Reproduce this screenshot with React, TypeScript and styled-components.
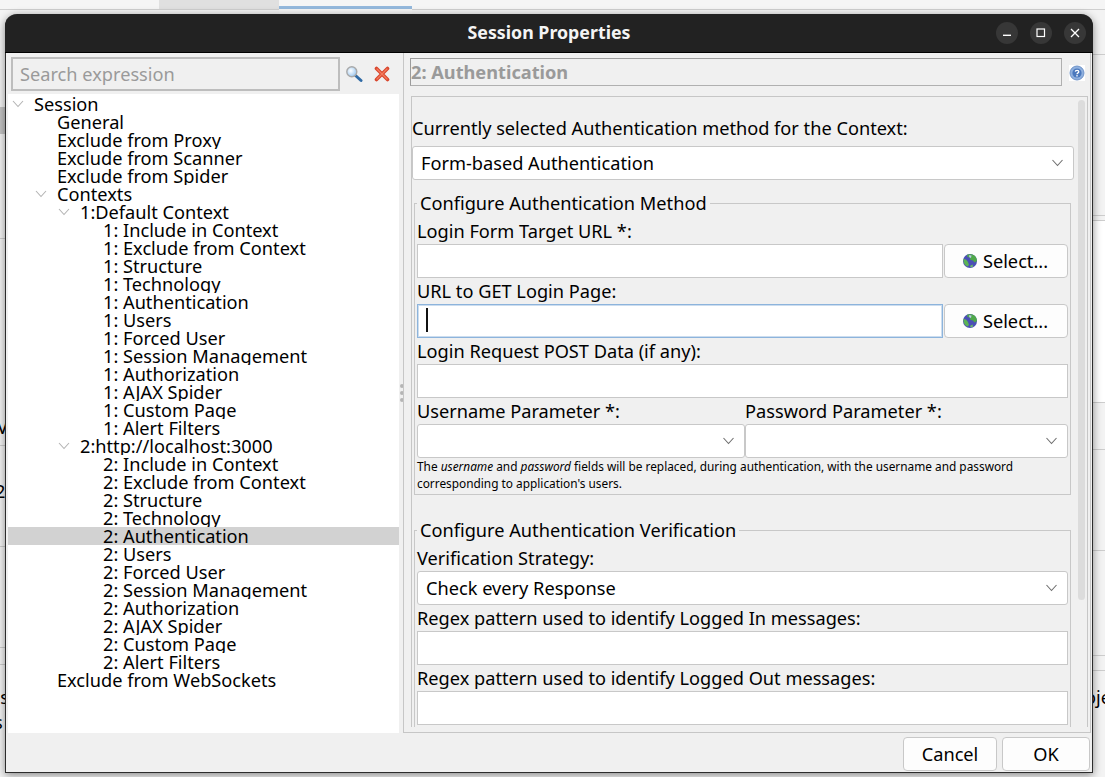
import styled, { createGlobalStyle } from "styled-components";

const FONT = `"Noto Sans", "DejaVu Sans", sans-serif`;

type TreeNode = {
  label: string;
  level: number;
  open?: boolean;
  selected?: boolean;
};

const contextItems = (n: number): TreeNode[] =>
  [
    "Include in Context",
    "Exclude from Context",
    "Structure",
    "Technology",
    "Authentication",
    "Users",
    "Forced User",
    "Session Management",
    "Authorization",
    "AJAX Spider",
    "Custom Page",
    "Alert Filters",
  ].map(name => ({
    label: `${n}: ${name}`,
    level: 3,
    selected: n === 2 && name === "Authentication",
  }));

const treeNodes: TreeNode[] = [
  { label: "Session", level: 0, open: true },
  { label: "General", level: 1 },
  { label: "Exclude from Proxy", level: 1 },
  { label: "Exclude from Scanner", level: 1 },
  { label: "Exclude from Spider", level: 1 },
  { label: "Contexts", level: 1, open: true },
  { label: "1:Default Context", level: 2, open: true },
  ...contextItems(1),
  { label: "2:http://localhost:3000", level: 2, open: true },
  ...contextItems(2),
  { label: "Exclude from WebSockets", level: 1 },
];

// window lines of the app behind the dialog
const backdropRules = [
  { top: 238, side: "left" },
  { top: 445, side: "left" },
  { top: 546, side: "left" },
  { top: 647, side: "left" },
  { top: 664, side: "left" },
  { top: 54, side: "right" },
  { top: 215, side: "right" },
  { top: 220, side: "right" },
  { top: 402, side: "right" },
  { top: 449, side: "right" },
  { top: 550, side: "right" },
  { top: 655, side: "right" },
  { top: 670, side: "right" },
];

const Chevron = () => (
  <ChevronSvg width="13" height="8" viewBox="0 0 13 8" fill="none">
    <path d="M1.5 1 L6.5 6.5 L11.5 1" stroke="#6e6e6e" strokeWidth="1.1" />
  </ChevronSvg>
);

const TreeChevron = () => (
  <svg width="12" height="8" viewBox="0 0 12 8" fill="none">
    <path d="M1 1 L6 6.5 L11 1" stroke="#b4b4b4" strokeWidth="1.1" />
  </svg>
);

const SearchIcon = () => (
  <svg width="18" height="18" viewBox="0 0 18 18">
    <defs>
      <radialGradient id="lens" cx="40%" cy="40%" r="70%">
        <stop offset="0%" stopColor="#ffffff" />
        <stop offset="100%" stopColor="#8fc0ee" />
      </radialGradient>
    </defs>
    <path d="M10.5 10.5 L16 15.5" stroke="#2f6aa5" strokeWidth="3" strokeLinecap="round" />
    <circle cx="6.8" cy="6.8" r="5" fill="url(#lens)" stroke="#a9a9a9" strokeWidth="1.4" />
  </svg>
);

const ClearIcon = () => (
  <svg width="16" height="16" viewBox="0 0 16 16">
    <path d="M2.5 2.5 L13.5 13.5 M13.5 2.5 L2.5 13.5" stroke="#d8452c" strokeWidth="3.6" strokeLinecap="round" />
    <path d="M3 3 L13 13 M13 3 L3 13" stroke="#f47b5e" strokeWidth="1.4" strokeLinecap="round" />
  </svg>
);

const HelpIcon = () => (
  <svg width="16" height="16" viewBox="0 0 16 16">
    <rect width="16" height="16" fill="#ffffff" />
    <circle cx="8" cy="8" r="7" fill="#8fb0de" stroke="#6f93c8" />
    <circle cx="8" cy="8" r="4.6" fill="#4a78bd" />
    <path d="M6.3 6.6 C6.4 4.9 9.8 4.9 9.8 6.7 C9.8 7.9 8 7.8 8 9.2" stroke="#fff" strokeWidth="1.3" fill="none" />
    <rect x="7.3" y="10.1" width="1.4" height="1.4" fill="#fff" />
  </svg>
);

const GlobeIcon = () => (
  <svg width="14" height="14" viewBox="0 0 14 14">
    <circle cx="7" cy="7" r="7" fill="#4a4fb5" />
    <path d="M4 .8 C6 -.2 10 0 12 2 C13.5 3.5 14 6 14 7 L11.5 8.5 L10 6.5 L7.5 6 L6.5 3.5 L4.5 3 Z" fill="#4fa84a" />
    <path d="M.3 5 L3 5.5 L5 8 L6 11 L4.5 12.5 C2 11.5 .2 9 .3 5 Z" fill="#5cb356" />
    <path d="M7 12 L9.5 10.5 L10 12.5 L8 13.5 Z" fill="#6fbf68" />
    <path d="M6 1.2 L8.5 1.5 L8 4 L6.3 3.2 Z" fill="#b9c7e8" />
  </svg>
);

const App = () => {
  return (
    <>
      <GlobalStyle />
      <Desktop>
        <TopStrip>
          <TopTab />
          <ActiveTab />
        </TopStrip>
        <LeftDarkBlock />
        {backdropRules.map(rule => (
          <BackdropRule key={`${rule.side}${rule.top}`} $top={rule.top} $side={rule.side} />
        ))}
        <WhiteGap />
        <BackdropText $top={415} $left={-3}>V</BackdropText>
        <BackdropText $top={479} $left={-5}>2</BackdropText>
        <BackdropText $top={685} $left={-11}>us</BackdropText>
        <BackdropText $top={710} $left={-6}>s</BackdropText>
        <BackdropText $top={685} $left={1085}>oject</BackdropText>

        <Dialog>
          <TitleBar>
            <TitleText>Session Properties</TitleText>
            <WindowButtons>
              <WindowButton aria-label="Minimize">
                <svg width="12" height="12" viewBox="0 0 12 12">
                  <rect x="2" y="7.6" width="8" height="1.4" fill="#fff" />
                </svg>
              </WindowButton>
              <WindowButton aria-label="Maximize">
                <svg width="12" height="12" viewBox="0 0 12 12" fill="none">
                  <rect x="2" y="2" width="7.5" height="7.5" stroke="#fff" strokeWidth="1.2" />
                </svg>
              </WindowButton>
              <WindowButton aria-label="Close">
                <svg width="12" height="12" viewBox="0 0 12 12" fill="none">
                  <path d="M2 2 L10 10 M10 2 L2 10" stroke="#fff" strokeWidth="1.3" />
                </svg>
              </WindowButton>
            </WindowButtons>
          </TitleBar>

          <Main>
            <LeftPanel>
              <SearchRow>
                <SearchInput placeholder="Search expression" />
                <SearchIconSlot>
                  <SearchIcon />
                </SearchIconSlot>
                <ClearIconSlot>
                  <ClearIcon />
                </ClearIconSlot>
              </SearchRow>
              <Tree>
                {treeNodes.map(node => (
                  <TreeRow key={node.label} $level={node.level} $selected={node.selected}>
                    <Expander>{node.open && <TreeChevron />}</Expander>
                    {node.label}
                  </TreeRow>
                ))}
              </Tree>
            </LeftPanel>

            <Splitter>
              <SplitterDot />
              <SplitterDot />
              <SplitterDot />
            </Splitter>

            <RightPanel>
              <HeaderRow>
                <PanelTitle>2: Authentication</PanelTitle>
                <HelpSlot>
                  <HelpIcon />
                </HelpSlot>
              </HeaderRow>
              <ScrollBox>
                <ScrollThumb />
                <PlainLabel>Currently selected Authentication method for the Context:</PlainLabel>
                <MethodCombo>
                  Form-based Authentication
                  <Chevron />
                </MethodCombo>

                <Group>
                  <Legend>Configure Authentication Method</Legend>
                  <FieldLabel>Login Form Target URL *:</FieldLabel>
                  <FieldRow>
                    <TextField />
                    <SelectButton>
                      <GlobeIcon />
                      Select...
                    </SelectButton>
                  </FieldRow>
                  <FieldLabel>URL to GET Login Page:</FieldLabel>
                  <FieldRow>
                    <TextField $focused>
                      <Caret />
                    </TextField>
                    <SelectButton>
                      <GlobeIcon />
                      Select...
                    </SelectButton>
                  </FieldRow>
                  <FieldLabel>Login Request POST Data (if any):</FieldLabel>
                  <FieldRow>
                    <TextField />
                  </FieldRow>
                  <ParamLabels>
                    <FieldLabel>Username Parameter *:</FieldLabel>
                    <FieldLabel>Password Parameter *:</FieldLabel>
                  </ParamLabels>
                  <ParamCombos>
                    <Combo>
                      <Chevron />
                    </Combo>
                    <Combo>
                      <Chevron />
                    </Combo>
                  </ParamCombos>
                  <Note>
                    The <em>username</em> and <em>password</em> fields will be replaced, during authentication, with the
                    username and password corresponding to application's users.
                  </Note>
                </Group>

                <SecondGroup>
                  <Legend>Configure Authentication Verification</Legend>
                  <FieldLabel>Verification Strategy:</FieldLabel>
                  <FieldRow>
                    <StrategyCombo>
                      Check every Response
                      <Chevron />
                    </StrategyCombo>
                  </FieldRow>
                  <FieldLabel>Regex pattern used to identify Logged In messages:</FieldLabel>
                  <FieldRow>
                    <TextField />
                  </FieldRow>
                  <FieldLabel>Regex pattern used to identify Logged Out messages:</FieldLabel>
                  <FieldRow>
                    <TextField />
                  </FieldRow>
                </SecondGroup>
              </ScrollBox>
            </RightPanel>
          </Main>

          <Footer>
            <CancelButton>Cancel</CancelButton>
            <OkButton>OK</OkButton>
          </Footer>
        </Dialog>
      </Desktop>
    </>
  );
};

export default App;

const GlobalStyle = createGlobalStyle`
  * {
    box-sizing: border-box;
  }
  html, body {
    margin: 0;
    padding: 0;
    background: #f3f3f3;
  }
`;

const ChevronSvg = styled.svg`
  flex: none;
  margin-left: auto;
`;

const Desktop = styled.div`
  position: relative;
  width: 1105px;
  height: 777px;
  overflow: hidden;
  font-family: ${FONT};
  font-size: 18.2px;
  color: #000;
`;

const TopStrip = styled.div`
  display: flex;
  height: 10px;
  padding-left: 159px;
  background: #f5f5f5;
  border-bottom: 1px solid #cfcfcf;
`;

const TopTab = styled.div`
  width: 120px;
  background: #e0e0e0;
`;

const ActiveTab = styled.div`
  width: 133px;
  height: 9px;
  border-top: 3px solid #94b8dc;
  margin-top: 6px;
  background: #f5f5f5;
`;

const LeftDarkBlock = styled.div`
  position: absolute;
  left: 0;
  top: 107px;
  width: 5px;
  height: 27px;
  background: #c4c4c4;
`;

const BackdropRule = styled.div<{ $top: number; $side: string }>`
  position: absolute;
  top: ${p => p.$top}px;
  ${p => (p.$side === "left" ? "left: 0;" : "right: 0;")}
  width: 14px;
  height: 1px;
  background: #cdcdcd;
`;

const WhiteGap = styled.div`
  position: absolute;
  right: 0;
  top: 221px;
  width: 14px;
  height: 181px;
  background: #fff;
`;

const BackdropText = styled.div<{ $top: number; $left: number }>`
  position: absolute;
  top: ${p => p.$top}px;
  left: ${p => p.$left}px;
  white-space: nowrap;
`;

const Dialog = styled.div`
  position: absolute;
  left: 5px;
  top: 14px;
  width: 1088px;
  height: 759px;
  display: flex;
  flex-direction: column;
  background: #f0f0f0;
  border: 1px solid #2c2c2c;
  border-top: none;
  border-radius: 12px 12px 0 0;
  box-shadow: 0 2px 9px rgba(0, 0, 0, 0.45);
`;

const TitleBar = styled.div`
  position: relative;
  flex: none;
  height: 39px;
  margin: 0 -1px;
  padding-bottom: 2px;
  display: flex;
  align-items: center;
  justify-content: center;
  background: #222222;
  border-bottom: 1px solid #000;
  border-radius: 12px 12px 0 0;
`;

const TitleText = styled.div`
  font-size: 17.8px;
  font-weight: 700;
  color: #f4f4f4;
`;

const WindowButtons = styled.div`
  position: absolute;
  right: 7px;
  top: 8px;
  display: flex;
  gap: 12px;
`;

const WindowButton = styled.div`
  width: 22px;
  height: 22px;
  display: flex;
  align-items: center;
  justify-content: center;
  border-radius: 50%;
  background: #373737;
`;

const Main = styled.div`
  flex: none;
  height: 680px;
  display: flex;
`;

const LeftPanel = styled.div`
  width: 394px;
  display: flex;
  flex-direction: column;
`;

const SearchRow = styled.div`
  flex: none;
  height: 41px;
  padding: 4px 0 0 5px;
  display: flex;
  align-items: flex-start;
`;

const SearchInput = styled.input`
  width: 329px;
  height: 34px;
  padding: 0 0 1px 7px;
  background: #f0f0f0;
  border: 2px solid #bdbdbd;
  outline: none;
  font-family: ${FONT};
  font-size: 18.2px;
  &::placeholder {
    color: #9a9a9a;
    opacity: 1;
  }
`;

const IconSlot = styled.div`
  display: flex;
  flex: none;
`;

const SearchIconSlot = styled(IconSlot)`
  margin: 8px 0 0 5px;
`;

const ClearIconSlot = styled(IconSlot)`
  margin: 9px 0 0 11px;
`;

const Tree = styled.div`
  flex: 1;
  margin-left: 2px;
  width: 391px;
  padding-top: 1px;
  background: #fff;
  overflow: hidden;
`;

const TreeRow = styled.div<{ $level: number; $selected?: boolean }>`
  height: 18px;
  line-height: 18px;
  padding-left: ${p => 4 + p.$level * 23}px;
  display: flex;
  align-items: center;
  overflow: hidden;
  white-space: nowrap;
  background: ${p => (p.$selected ? "#d2d2d2" : "transparent")};
`;

const Expander = styled.span`
  flex: none;
  width: 22px;
  height: 18px;
  display: flex;
  align-items: center;
`;

const Splitter = styled.div`
  width: 3px;
  display: flex;
  flex-direction: column;
  align-items: center;
  justify-content: center;
  gap: 3px;
`;

const SplitterDot = styled.div`
  width: 4px;
  height: 4px;
  flex: none;
  border-radius: 50%;
  background: #b5b5b5;
`;

const RightPanel = styled.div`
  width: 688px;
  display: flex;
  flex-direction: column;
  border: 1px solid #c6c6c6;
  border-top: none;
`;

const HeaderRow = styled.div`
  flex: none;
  height: 43px;
  padding: 5px 0 0 6px;
  display: flex;
`;

const PanelTitle = styled.div`
  width: 652px;
  height: 28px;
  line-height: 26px;
  font-weight: 700;
  font-size: 18.2px;
  color: #9a9a9a;
  border: 1px solid #b0b0b0;
  border-top-color: #9c9c9c;
  border-left-color: #9c9c9c;
`;

const HelpSlot = styled(IconSlot)`
  margin: 7px 0 0 7px;
`;

const ScrollBox = styled.div`
  position: relative;
  flex: none;
  width: 677px;
  height: 631px;
  margin-left: 7px;
  padding-top: 22px;
  border: 1px solid #c6c6c6;
  border-bottom: none;
  overflow: hidden;
`;

const ScrollThumb = styled.div`
  position: absolute;
  right: 2px;
  top: 3px;
  width: 7px;
  height: 500px;
  border-radius: 4px;
  background: #dcdcdc;
`;

const PlainLabel = styled.div`
  height: 18px;
  line-height: 18px;
  white-space: nowrap;
`;

const Combo = styled.div`
  height: 34px;
  padding: 0 9px 1px 8px;
  display: flex;
  align-items: center;
  background: #fff;
  border: 1px solid #c8c8c8;
  border-radius: 3px;
  white-space: nowrap;
`;

const MethodCombo = styled(Combo)`
  width: 662px;
  margin-top: 9px;
`;

const StrategyCombo = styled(Combo)`
  flex: 1;
`;

const Group = styled.fieldset`
  width: 657px;
  margin: 13px 0 0 2px;
  padding: 5px 2px 2px 2px;
  border: 1px solid #c8c8c8;
  min-inline-size: 0;
`;

const SecondGroup = styled(Group)`
  margin-top: 25px;
  height: 240px;
`;

const Legend = styled.legend`
  height: 20px;
  line-height: 20px;
  margin-left: 0;
  padding: 0 3px;
`;

const FieldLabel = styled.div`
  height: 18px;
  line-height: 18px;
  margin: 4px 0;
  white-space: nowrap;
`;

const FieldRow = styled.div`
  height: 34px;
  display: flex;
  align-items: stretch;
  gap: 1px;
`;

const TextField = styled.div<{ $focused?: boolean }>`
  position: relative;
  flex: 1;
  background: #fff;
  border: 1px solid ${p => (p.$focused ? "#8db4dc" : "#c8c8c8")};
  box-shadow: ${p => (p.$focused ? "inset 0 0 0 1px rgba(141, 180, 220, 0.45)" : "none")};
`;

const Caret = styled.div`
  position: absolute;
  left: 8px;
  top: 3px;
  width: 2px;
  height: 24px;
  background: #111;
`;

const SelectButton = styled.div`
  flex: none;
  width: 124px;
  padding: 0 1px 1px 0;
  display: flex;
  align-items: center;
  justify-content: center;
  gap: 6px;
  background: #fdfdfd;
  border: 1px solid #c8c8c8;
  border-radius: 4px;
`;

const ParamLabels = styled.div`
  display: grid;
  grid-template-columns: 328px 323px;
`;

const ParamCombos = styled.div`
  display: grid;
  grid-template-columns: 328px 323px;
`;

const Note = styled.div`
  height: 34px;
  padding-right: 40px;
  font-size: 11.85px;
  line-height: 17px;
`;

const Footer = styled.div`
  flex: 1;
  display: flex;
  justify-content: flex-end;
  gap: 5px;
  padding: 4px 2px 0 0;
`;

const FooterButton = styled.div`
  height: 34px;
  padding-bottom: 1px;
  display: flex;
  align-items: center;
  justify-content: center;
  background: #fdfdfd;
  border: 1px solid #c8c8c8;
  border-radius: 4px;
`;

const CancelButton = styled(FooterButton)`
  width: 94px;
`;

const OkButton = styled(FooterButton)`
  width: 88px;
`;
